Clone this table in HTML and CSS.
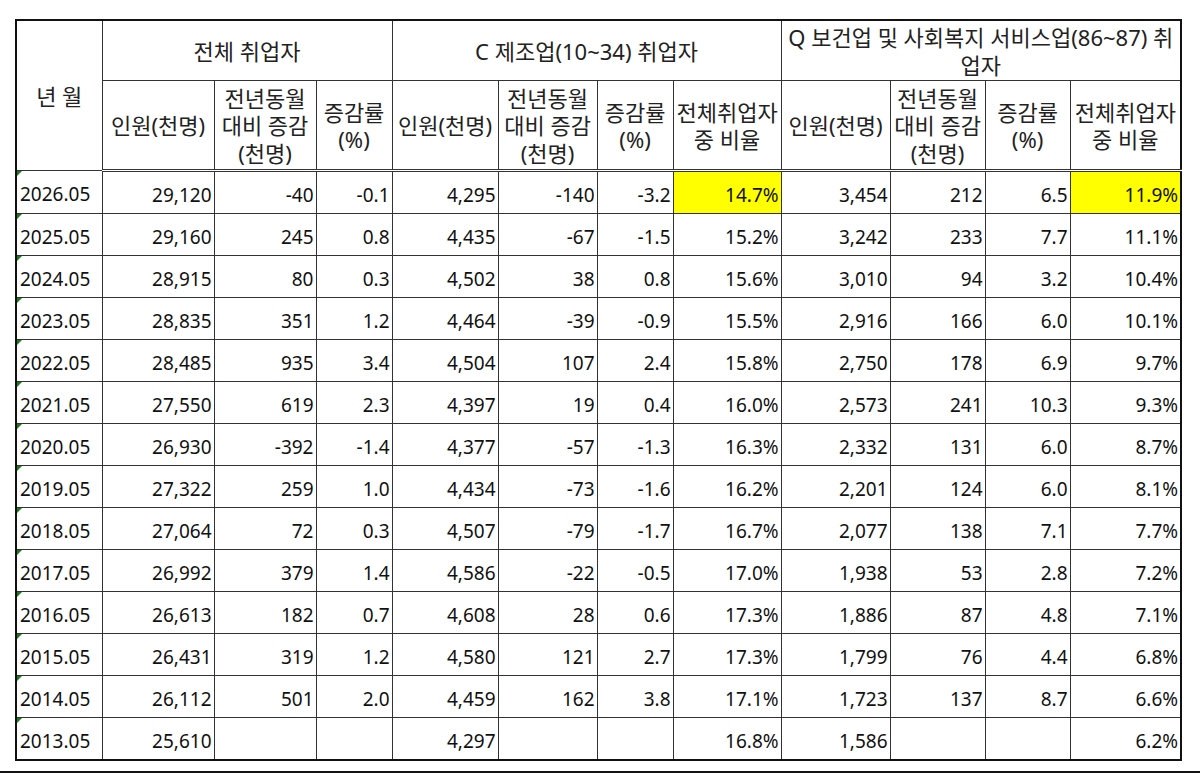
FILE: index.html
```html
<!DOCTYPE html>
<html lang="ko">
<head>
<meta charset="utf-8">
<title>취업자 통계</title>
<link rel="stylesheet" href="styles.css">
</head>
<body>
<div class="page">
<table class="sheet">
<colgroup>
<col class="c-ym"><col class="c1"><col class="c2"><col class="c3">
<col class="c4"><col class="c5"><col class="c6"><col class="c7">
<col class="c8"><col class="c9"><col class="c10"><col class="c11">
</colgroup>
<thead>
<tr class="h1">
<th rowspan="2" class="ym-head">년 월</th>
<th colspan="3">전체 취업자</th>
<th colspan="4">C 제조업(10~34) 취업자</th>
<th colspan="4">Q 보건업 및 사회복지 서비스업(86~87) 취업자</th>
</tr>
<tr class="h2">
<th>인원(천명)</th><th>전년동월<br>대비 증감<br>(천명)</th><th>증감률<br>(%)</th>
<th>인원(천명)</th><th>전년동월<br>대비 증감<br>(천명)</th><th>증감률<br>(%)</th><th>전체취업자<br>중 비율</th>
<th>인원(천명)</th><th>전년동월<br>대비 증감<br>(천명)</th><th>증감률<br>(%)</th><th>전체취업자<br>중 비율</th>
</tr>
</thead>
<tbody>
<tr><td class="ym">2026.05</td><td>29,120</td><td>-40</td><td>-0.1</td><td>4,295</td><td>-140</td><td>-3.2</td><td class="hl">14.7%</td><td>3,454</td><td>212</td><td>6.5</td><td class="hl">11.9%</td></tr>
<tr><td class="ym">2025.05</td><td>29,160</td><td>245</td><td>0.8</td><td>4,435</td><td>-67</td><td>-1.5</td><td>15.2%</td><td>3,242</td><td>233</td><td>7.7</td><td>11.1%</td></tr>
<tr><td class="ym">2024.05</td><td>28,915</td><td>80</td><td>0.3</td><td>4,502</td><td>38</td><td>0.8</td><td>15.6%</td><td>3,010</td><td>94</td><td>3.2</td><td>10.4%</td></tr>
<tr><td class="ym">2023.05</td><td>28,835</td><td>351</td><td>1.2</td><td>4,464</td><td>-39</td><td>-0.9</td><td>15.5%</td><td>2,916</td><td>166</td><td>6.0</td><td>10.1%</td></tr>
<tr><td class="ym">2022.05</td><td>28,485</td><td>935</td><td>3.4</td><td>4,504</td><td>107</td><td>2.4</td><td>15.8%</td><td>2,750</td><td>178</td><td>6.9</td><td>9.7%</td></tr>
<tr><td class="ym">2021.05</td><td>27,550</td><td>619</td><td>2.3</td><td>4,397</td><td>19</td><td>0.4</td><td>16.0%</td><td>2,573</td><td>241</td><td>10.3</td><td>9.3%</td></tr>
<tr><td class="ym">2020.05</td><td>26,930</td><td>-392</td><td>-1.4</td><td>4,377</td><td>-57</td><td>-1.3</td><td>16.3%</td><td>2,332</td><td>131</td><td>6.0</td><td>8.7%</td></tr>
<tr><td class="ym">2019.05</td><td>27,322</td><td>259</td><td>1.0</td><td>4,434</td><td>-73</td><td>-1.6</td><td>16.2%</td><td>2,201</td><td>124</td><td>6.0</td><td>8.1%</td></tr>
<tr><td class="ym">2018.05</td><td>27,064</td><td>72</td><td>0.3</td><td>4,507</td><td>-79</td><td>-1.7</td><td>16.7%</td><td>2,077</td><td>138</td><td>7.1</td><td>7.7%</td></tr>
<tr><td class="ym">2017.05</td><td>26,992</td><td>379</td><td>1.4</td><td>4,586</td><td>-22</td><td>-0.5</td><td>17.0%</td><td>1,938</td><td>53</td><td>2.8</td><td>7.2%</td></tr>
<tr><td class="ym">2016.05</td><td>26,613</td><td>182</td><td>0.7</td><td>4,608</td><td>28</td><td>0.6</td><td>17.3%</td><td>1,886</td><td>87</td><td>4.8</td><td>7.1%</td></tr>
<tr><td class="ym">2015.05</td><td>26,431</td><td>319</td><td>1.2</td><td>4,580</td><td>121</td><td>2.7</td><td>17.3%</td><td>1,799</td><td>76</td><td>4.4</td><td>6.8%</td></tr>
<tr><td class="ym">2014.05</td><td>26,112</td><td>501</td><td>2.0</td><td>4,459</td><td>162</td><td>3.8</td><td>17.1%</td><td>1,723</td><td>137</td><td>8.7</td><td>6.6%</td></tr>
<tr><td class="ym">2013.05</td><td>25,610</td><td></td><td></td><td>4,297</td><td></td><td></td><td>16.8%</td><td>1,586</td><td></td><td></td><td>6.2%</td></tr>
</tbody>
</table>
<div class="rule"></div>
</div>
</body>
</html>
```

FILE: styles.css
```css
html, body {
  margin: 0;
  padding: 0;
  background: #ffffff;
}
.page {
  padding: 19px 0 0 0;
  font-family: "Noto Sans", "Noto Sans CJK KR", sans-serif;
  font-size: 19px;
  color: #111;
}
.sheet {
  margin-left: 15px;
  border-collapse: collapse;
  table-layout: fixed;
  width: 1167px;
  border: 2px solid #111;
}
.c-ym { width: 86px; }
.c1 { width: 112px; }
.c2 { width: 102px; }
.c3 { width: 76px; }
.c4 { width: 106px; }
.c5 { width: 99px; }
.c6 { width: 76px; }
.c7 { width: 108px; }
.c8 { width: 109px; }
.c9 { width: 95px; }
.c10 { width: 85px; }
.c11 { width: 111px; }

.sheet th, .sheet td {
  border: 1px solid #333;
  padding: 0;
  overflow: hidden;
  white-space: nowrap;
}
.sheet th {
  font-weight: normal;
  font-size: 22px;
  color: #222;
  text-align: center;
  vertical-align: middle;
  line-height: 27.5px;
  white-space: normal;
}
.h1 th { height: 59px; line-height: 28px; padding: 0 2px; }
.h2 th { height: 86px; border-bottom: 3px double #333; padding-top: 2px; }
.ym-head { border-bottom: 3px double #333; }

.sheet td {
  height: 37px;
  text-align: right;
  padding: 4px 2px 0 0;
  vertical-align: middle;
  line-height: 20px;
}
.sheet td.ym {
  text-align: left;
  padding-left: 3px;
  position: relative;
}
.sheet td.ym::before {
  content: "";
  position: absolute;
  left: 0;
  top: 0;
  width: 0;
  height: 0;
  border-top: 5px solid #1e7b1e;
  border-right: 5px solid transparent;
}
.sheet td.hl { background: #ffff00; }

.rule {
  margin-top: 10px;
  height: 2px;
  background: #111;
  width: 1200px;
}
```
